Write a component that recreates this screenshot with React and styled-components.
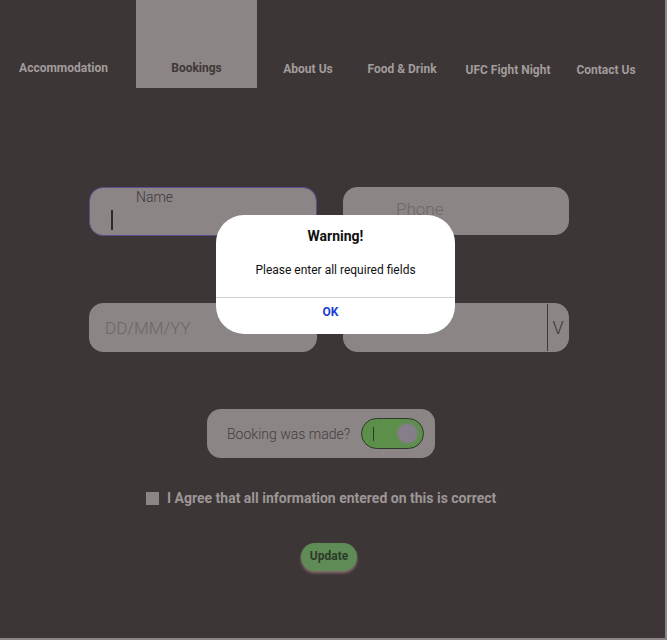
import React from 'react';
import styled, { createGlobalStyle } from 'styled-components';

const Global = createGlobalStyle`
  body {
    margin: 0;
    background: #8c8686;
    font-family: Roboto, "Liberation Sans", sans-serif;
  }
`;

const Screen = styled.div`
  position: relative;
  width: 665px;
  height: 638px;
  background: #3d3636;
  overflow: hidden;
`;

const Nav = styled.div`
  display: flex;
  height: 88px;
`;

const NavItem = styled.div`
  width: ${p => p.$w}px;
  margin-left: ${p => p.$ml || 0}px;
  display: flex;
  align-items: flex-end;
  justify-content: center;
  padding-bottom: ${p => p.$pb}px;
  box-sizing: border-box;
  background: ${p => (p.$active ? '#8b8585' : 'transparent')};
  color: ${p => (p.$active ? '#3f3838' : '#a29c9c')};
  font-size: 12px;
  font-weight: 700;
  white-space: nowrap;
`;

const Form = styled.div`
  display: flex;
  flex-direction: column;
  margin-left: 89px;
  width: 480px;
  padding-top: 99px;
`;

const Row = styled.div`
  display: flex;
  gap: 26px;
  margin-bottom: ${p => p.$mb}px;
`;

const Field = styled.div`
  position: relative;
  width: ${p => p.$w}px;
  height: ${p => p.$h || 48}px;
  box-sizing: border-box;
  border-radius: 14px;
  background: #8b8585;
  border: 1px solid ${p => (p.$focus ? '#5a4e8c' : '#8b8585')};
  display: flex;
  align-items: center;
  padding-left: ${p => p.$pl || 0}px;
  padding-bottom: ${p => p.$pbt || 0}px;
  color: #6d6767;
  font-size: 17px;
  font-weight: 300;
`;

const FloatLabel = styled.span`
  position: absolute;
  left: 46px;
  top: 1px;
  font-size: 14px;
  font-weight: 300;
  color: #3f3838;
`;

const Caret = styled.span`
  width: 2px;
  height: 20px;
  margin-top: 16px;
  background: #2e2828;
`;

const PickerDivider = styled.div`
  margin-left: auto;
  width: 1px;
  align-self: stretch;
  background: #3d3636;
`;

const PickerArrow = styled.span`
  width: 20px;
  text-align: center;
  font-size: 18px;
  font-weight: 300;
  color: #3d3636;
`;

const ToggleBox = styled.div`
  align-self: flex-start;
  margin-left: 118px;
  width: 228px;
  height: 49px;
  box-sizing: border-box;
  border-radius: 14px;
  background: #8b8585;
  display: flex;
  align-items: center;
  padding-left: 20px;
  gap: 11px;
  color: #453e3e;
  font-size: 14px;
  font-weight: 300;
`;

const Switch = styled.div`
  width: 63px;
  height: 31px;
  box-sizing: border-box;
  border-radius: 16px;
  border: 1px solid #2f3a2a;
  background: #5c8f4a;
  display: flex;
  align-items: center;
  padding: 0 6px 0 11px;
`;

const SwitchTick = styled.span`
  width: 1px;
  height: 14px;
  background: #2e3a28;
`;

const Knob = styled.span`
  margin-left: auto;
  width: 19px;
  height: 19px;
  border-radius: 50%;
  background: #877e8b;
  box-shadow: 0 0 4px #8a7f90;
`;

const AgreeRow = styled.label`
  display: flex;
  align-items: center;
  gap: 8px;
  margin: 32px 0 0 57px;
  color: #9c9696;
  font-size: 14px;
  font-weight: 700;
`;

const Box = styled.span`
  width: 13px;
  height: 13px;
  background: #8b8585;
`;

const UpdateButton = styled.button`
  align-self: flex-start;
  margin: 37px 0 0 212px;
  width: 56px;
  height: 28px;
  border: none;
  border-radius: 14px;
  background: #5f8c56;
  color: #2e3a2b;
  font-family: Roboto, "Liberation Sans", sans-serif;
  font-size: 12px;
  font-weight: 700;
  padding: 0 0 2px;
  box-shadow: 0 2px 3px #8a6f6f;
`;

const Modal = styled.div`
  position: absolute;
  left: 216px;
  top: 215px;
  width: 239px;
  height: 119px;
  border-radius: 28px;
  background: #ffffff;
  display: flex;
  flex-direction: column;
  align-items: center;
  color: #111;
`;

const ModalTitle = styled.div`
  margin-top: 13px;
  font-size: 14px;
  font-weight: 700;
`;

const ModalText = styled.div`
  margin-top: 19px;
  font-size: 12px;
`;

const ModalDivider = styled.div`
  margin-top: 20px;
  width: 100%;
  height: 1px;
  background: #cfcfcf;
`;

const ModalButton = styled.div`
  margin-top: 7px;
  color: #1b3fd4;
  font-size: 12px;
  font-weight: 700;
  padding-left: 0;
  margin-right: 10px;
`;

const navItems = [
  { label: 'Accommodation', w: 127, pb: 13 },
  { label: 'Bookings', w: 121, ml: 9, pb: 13, active: true },
  { label: 'About Us', w: 102, pb: 12 },
  { label: 'Food & Drink', w: 86, pb: 12 },
  { label: 'UFC Fight Night', w: 126, pb: 11 },
  { label: 'Contact Us', w: 70, pb: 11 },
];

export default function App() {
  return (
    <Screen>
      <Global />
      <Nav>
        {navItems.map(n => (
          <NavItem key={n.label} $w={n.w} $ml={n.ml} $pb={n.pb} $active={n.active}>
            {n.label}
          </NavItem>
        ))}
      </Nav>
      <Form>
        <Row $mb={67}>
          <Field $w={228} $h={49} $focus $pl={21}>
            <FloatLabel>Name</FloatLabel>
            <Caret />
          </Field>
          <Field $w={226} $pl={52} $pbt={5}>Phone</Field>
        </Row>
        <Row $mb={57}>
          <Field $w={228} $h={49} $pl={15}>DD/MM/YY</Field>
          <Field $w={227} $h={49}>
            <PickerDivider />
            <PickerArrow>V</PickerArrow>
          </Field>
        </Row>
        <ToggleBox>
          Booking was made?
          <Switch>
            <SwitchTick />
            <Knob />
          </Switch>
        </ToggleBox>
        <AgreeRow>
          <Box />
          I Agree that all information entered on this is correct
        </AgreeRow>
        <UpdateButton>Update</UpdateButton>
      </Form>
      <Modal>
        <ModalTitle>Warning!</ModalTitle>
        <ModalText>Please enter all required fields</ModalText>
        <ModalDivider />
        <ModalButton>OK</ModalButton>
      </Modal>
    </Screen>
  );
}
